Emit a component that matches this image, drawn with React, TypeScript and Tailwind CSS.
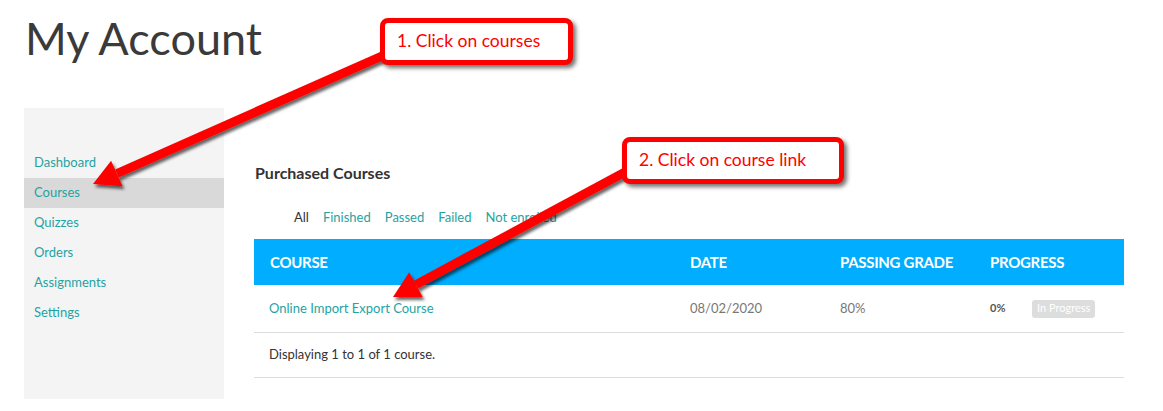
import React from "react";

const NAV = ["Dashboard", "Courses", "Quizzes", "Orders", "Assignments", "Settings"];
const TABS = ["All", "Finished", "Passed", "Failed", "Not enrolled"];

function Callout({ className, children }: { className: string; children: React.ReactNode }) {
  return (
    <div
      className={`absolute flex items-center rounded-[8px] border-[5px] border-[#ff0000] bg-white pl-[12px] text-[17.5px] text-[#ff0000] shadow-[3px_3px_4px_rgba(0,0,0,0.55)] ${className}`}
    >
      {children}
    </div>
  );
}

export default function App() {
  return (
    <div className="relative h-[411px] w-[1163px] overflow-hidden bg-white font-['Lato',sans-serif] text-[#333]">
      {/* Page title */}
      <div className="h-[108px] pl-[25px] pt-[10px] text-[45px] leading-[56px] text-[#3a3a3a]">My Account</div>

      <div className="flex">
        {/* Sidebar */}
        <nav className="ml-[24px] h-[291px] w-[200px] bg-[#f4f4f4] pt-[40px]">
          {NAV.map((n) => (
            <div
              key={n}
              className={`flex h-[30px] items-center pl-[10px] text-[13px] text-[#1fa3a3] ${n === "Courses" ? "bg-[#d9d9d9]" : ""}`}
            >
              {n}
            </div>
          ))}
        </nav>

        {/* Main */}
        <main className="ml-[30px] w-[870px] pt-[52px]">
          <h2 className="h-[26px] pl-[1px] text-[16px] font-bold leading-[26px] text-[#333]">Purchased Courses</h2>

          <div className="mt-[22px] flex h-[20px] items-center gap-[14px] pl-[40px] text-[13px]">
            {TABS.map((t) => (
              <span key={t} className={t === "All" ? "text-[#333]" : "text-[#1fa3a3]"}>
                {t}
              </span>
            ))}
          </div>

          <div className="mt-[11px]">
            <div className="grid h-[46px] grid-cols-[436px_150px_150px_1fr] items-center bg-[#00adfe] text-[15px] font-bold tracking-[-0.3px] text-white">
              <div className="pl-[16px]">COURSE</div>
              <div>DATE</div>
              <div>PASSING GRADE</div>
              <div>PROGRESS</div>
            </div>
            <div className="grid h-[48px] grid-cols-[436px_150px_150px_1fr] items-center border-b border-[#dddddd] text-[13px]">
              <div className="pl-[15px] text-[#1fa3a3]">Online Import Export Course</div>
              <div className="text-[#777]">08/02/2020</div>
              <div className="text-[#777]">80%</div>
              <div className="flex items-center">
                <span className="w-[42px] text-[11px] font-bold text-[#555]">0%</span>
                <span className="flex h-[18px] items-center rounded-[3px] bg-[#dddddd] px-[5px] text-[11px] text-white">
                  In Progress
                </span>
              </div>
            </div>
            <div className="flex h-[45px] items-center border-b border-[#dddddd] pl-[15px] text-[13px] text-[#333]">
              Displaying 1 to 1 of 1 course.
            </div>
          </div>
        </main>
      </div>

      {/* Annotation arrows */}
      <svg className="pointer-events-none absolute left-0 top-0" width="1163" height="411" viewBox="0 0 1163 411">
        <defs>
          <filter id="sh" x="-10%" y="-10%" width="120%" height="130%">
            <feDropShadow dx="2" dy="3" stdDeviation="1.6" floodColor="#000" floodOpacity="0.6" />
          </filter>
        </defs>
        <g filter="url(#sh)" fill="#ff0000">
          <line x1="400" y1="48" x2="117" y2="173.5" stroke="#ff0000" strokeWidth="9" />
          <polygon points="93,184 122.5,186.3 111.1,160.7" />
          <line x1="640" y1="164" x2="416" y2="284.6" stroke="#ff0000" strokeWidth="9" />
          <polygon points="393,297 422.6,296.9 409.2,272.3" />
        </g>
      </svg>

      <Callout className="left-[380px] top-[18px] h-[47px] w-[193px]">1. Click on courses</Callout>
      <Callout className="left-[622px] top-[137px] h-[47px] w-[222px]">2. Click on course link</Callout>
    </div>
  );
}
